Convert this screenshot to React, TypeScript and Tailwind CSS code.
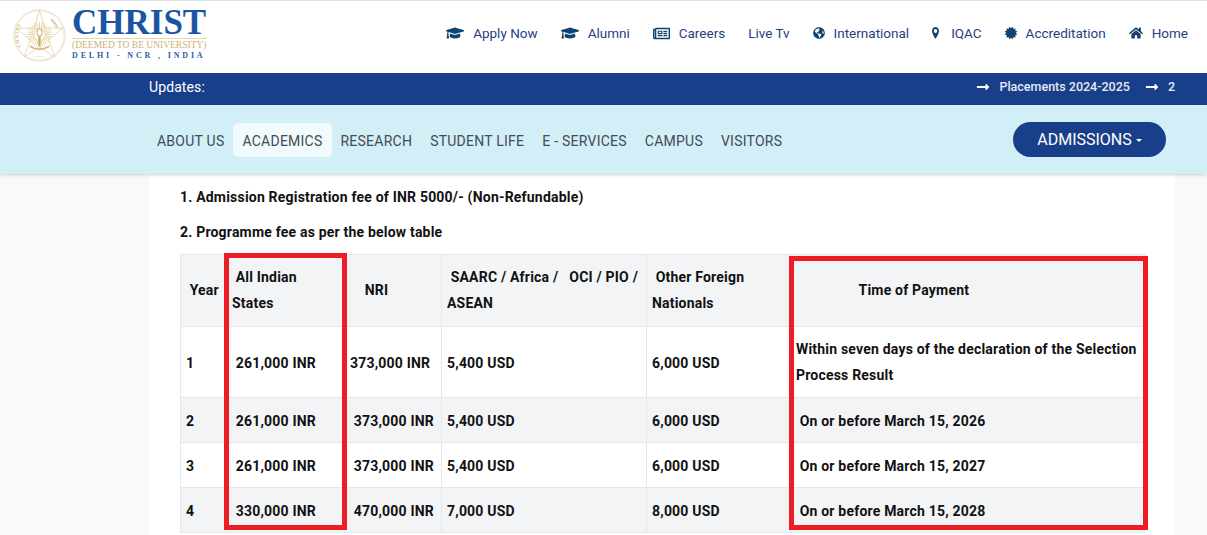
import { FaGraduationCap, FaRegNewspaper, FaGlobeAmericas, FaCertificate, FaHome, FaLongArrowAltRight } from "react-icons/fa";
import type { ReactNode } from "react";

const Pin = () => (
  <svg className="mr-[3px]" width="7" height="12" viewBox="0 0 8 12" preserveAspectRatio="none" fill="currentColor">
    <path fillRule="evenodd" d="M4 0C1.8 0 0 1.8 0 4c0 2.5 4 8 4 8s4-5.5 4-8c0-2.2-1.8-4-4-4zm0 6a2 2 0 1 1 0-4 2 2 0 0 1 0 4z" />
  </svg>
);

const topLinks = [
  { label: "Apply Now", icon: <FaGraduationCap className="text-[18px]" /> },
  { label: "Alumni", icon: <FaGraduationCap className="text-[18px]" /> },
  { label: "Careers", icon: <FaRegNewspaper className="text-[17px]" /> },
  { label: "Live Tv", icon: null },
  { label: "International", icon: <FaGlobeAmericas className="text-[12px]" /> },
  { label: "IQAC", icon: <Pin /> },
  { label: "Accreditation", icon: <FaCertificate className="text-[12px]" /> },
  { label: "Home", icon: <FaHome className="text-[14px]" /> },
];

const navItems = ["ABOUT US", "ACADEMICS", "RESEARCH", "STUDENT LIFE", "E - SERVICES", "CAMPUS", "VISITORS"];

const rows = [
  { y: "1", a: "\u00a0261,000 INR", n: "373,000 INR", s: "5,400 USD", o: "6,000 USD", t: "Within seven days of the declaration of the Selection Process Result", h: "h-[71px]" },
  { y: "2", a: "\u00a0261,000 INR", n: "\u00a0373,000 INR", s: "5,400 USD", o: "6,000 USD", t: "\u00a0On or before March 15, 2026", h: "h-[45px] bg-[#f3f4f6]" },
  { y: "3", a: "\u00a0261,000 INR", n: "\u00a0373,000 INR", s: "5,400 USD", o: "6,000 USD", t: "\u00a0On or before March 15, 2027", h: "h-[45px]" },
  { y: "4", a: "\u00a0330,000 INR", n: "\u00a0470,000 INR", s: "7,000 USD", o: "8,000 USD", t: "\u00a0On or before March 15, 2028", h: "h-[45px] bg-[#f3f4f6]" },
];

function Cell({ children, className = "" }: { children: ReactNode; className?: string }) {
  return <td className={`border border-[#e5e7eb] px-[5px] align-middle ${className}`}>{children}</td>;
}

function HeadCell({ children }: { children: ReactNode }) {
  return <Cell className="pt-0 pb-[2px]">{children}</Cell>;
}

function BodyCell({ children }: { children: ReactNode }) {
  return <Cell className="pt-[1px] pb-0">{children}</Cell>;
}

function Emblem() {
  const rays = Array.from({ length: 28 }, (_, i) => (i * Math.PI * 2) / 28);
  return (
    <svg width="53" height="53" viewBox="0 0 54 54" fill="none" stroke="#dfc996" strokeWidth="0.6">
      <defs>
        <path id="emblem-arc" d="M8.5 38 A21 21 0 0 1 22 6.5" />
      </defs>
      <circle cx="27" cy="27" r="26.2" />
      <circle cx="27" cy="27" r="25" strokeWidth="0.4" />
      <polygon points="27,1.5 32.5,19.5 51,19.5 36.5,31 42.5,49 27,38.5 11.5,49 17.5,31 3,19.5 21.5,19.5" strokeWidth="0.7" />
      {rays.map((a) => (
        <line key={a} x1={27 + 5 * Math.cos(a)} y1={26 + 5 * Math.sin(a)} x2={27 + 12.5 * Math.cos(a)} y2={26 + 12.5 * Math.sin(a)} stroke="#e8d3a2" strokeWidth="1" />
      ))}
      <ellipse cx="27" cy="24" rx="2.6" ry="4" fill="#fff" stroke="#b98f45" strokeWidth="0.8" />
      <rect x="25.9" y="27" width="2.2" height="11" fill="#c9a765" stroke="none" />
      <path d="M17 38 Q27 44 37 38" stroke="#d5b97e" strokeWidth="1.8" />
      <path d="M39 11 A20 20 0 0 1 45 19" stroke="#d9c089" strokeWidth="2.6" strokeDasharray="1.6 0.7" />
      <text fontSize="4.6" fontWeight="700" fill="#d3b67a" stroke="none" fontFamily="'Liberation Serif', serif" letterSpacing="1">
        <textPath href="#emblem-arc">CHRIST</textPath>
      </text>
      <text x="27" y="49" textAnchor="middle" fontSize="2.8" fill="#d9c089" stroke="none" fontFamily="'Liberation Serif', serif">SERVICE</text>
    </svg>
  );
}

export default function App() {
  return (
    <div className="relative w-[1207px] h-[535px] overflow-hidden bg-[#f8f9fb] font-['Roboto',sans-serif]">
      {/* Top header */}
      <div className="h-[73px] flex items-start justify-between bg-white border-t border-[#e0e0e0] pl-[13px] pr-[19px]">
        <div className="flex items-start gap-[6px] pt-[8px]">
          <Emblem />
          <div className="w-[135px] pt-[1px] font-['Liberation_Serif',serif]">
            <div className="text-[35px] leading-[26px] font-bold text-[#1b54a3] whitespace-nowrap">CHRIST</div>
            <div className="mt-[2px] border-t border-[#e6d5ae] pt-[1px] text-[9.5px] leading-[11px] text-[#d0b27a] whitespace-nowrap">(DEEMED TO BE UNIVERSITY)</div>
            <div className="mt-0 text-[8px] leading-[10px] font-bold tracking-[2.85px] text-[#2f5ea8] whitespace-nowrap">DELHI - NCR , INDIA</div>
          </div>
        </div>
        <div className="flex items-center gap-[23px] h-[64px] text-[13.5px] text-[#1f3f7f]">
          {topLinks.map((l) => (
            <div key={l.label} className="flex items-center gap-[9px]">
              {l.icon && <span className="text-[#0f4470]">{l.icon}</span>}
              <span>{l.label}</span>
            </div>
          ))}
        </div>
      </div>

      {/* Updates bar */}
      <div className="h-[32px] flex items-center justify-between bg-[#1a3f8a] pl-[149px] pr-[32px] pb-[4px] text-white">
        <span className="text-[14px] tracking-[0.1px]">Updates:</span>
        <div className="flex items-center text-[12.5px] font-medium text-[#e6eaf4]">
          <FaLongArrowAltRight className="text-[14px] text-white mr-[9px]" />
          <span>Placements 2024-2025</span>
          <FaLongArrowAltRight className="text-[14px] text-white ml-[15px] mr-[9px]" />
          <span>2</span>
        </div>
      </div>

      {/* Main nav */}
      <div className="h-[69px] flex items-start justify-between bg-[#d2eff8] pl-[148px] pr-[41px] shadow-[0_1px_3px_rgba(0,0,0,0.18)] relative z-10">
        <div className="flex items-center mt-[18px] text-[14px] tracking-[0.24px] text-[#444b52]">
          {navItems.map((n) => (
            <div key={n} className={n === "ACADEMICS" ? "h-[34px] flex items-center px-[9px] pt-[2px] rounded-[5px] bg-[#f1fafd]" : "h-[34px] flex items-center px-[9px] pt-[2px]"}>{n}</div>
          ))}
        </div>
        <div className="w-[153px] h-[35px] mt-[17px] pt-[1px] flex items-center justify-center rounded-full bg-[#1a3f8a] text-white text-[16px]">
          ADMISSIONS
          <span className="ml-[4px] w-0 h-0 border-x-[3px] border-x-transparent border-t-[3px] border-t-white" />
        </div>
      </div>

      {/* Page content */}
      <div className="ml-[149px] w-[1026px] h-[361px] bg-white pl-[31px] pt-[13px] text-[14px] font-bold tracking-[0.2px] text-[#111]">
        <p className="h-[20px] leading-[20px]">1. Admission Registration fee of INR 5000/- (Non-Refundable)</p>
        <p className="mt-[15px] h-[20px] leading-[20px]">2. Programme fee as per the below table</p>
        <table className="mt-[12px] w-[964px] table-fixed border-collapse leading-[26px]">
          <colgroup>
            <col className="w-[46px]" />
            <col className="w-[118px]" />
            <col className="w-[97px]" />
            <col className="w-[205px]" />
            <col className="w-[144px]" />
            <col className="w-[354px]" />
          </colgroup>
          <thead>
            <tr className="h-[72px] bg-[#f3f4f6]">
              <HeadCell>{"\u00a0Year"}</HeadCell>
              <HeadCell>{"\u00a0All Indian"}<br />States</HeadCell>
              <HeadCell>{"\u00a0\u00a0\u00a0\u00a0NRI"}</HeadCell>
              <HeadCell>{"\u00a0SAARC / Africa /\u00a0\u00a0 OCI / PIO / ASEAN"}</HeadCell>
              <HeadCell>{"\u00a0Other Foreign Nationals"}</HeadCell>
              <HeadCell>{"\u00a0\u00a0\u00a0\u00a0\u00a0\u00a0\u00a0\u00a0\u00a0\u00a0\u00a0\u00a0\u00a0\u00a0\u00a0\u00a0\u00a0Time of Payment"}</HeadCell>
            </tr>
          </thead>
          <tbody>
            {rows.map((r) => (
              <tr key={r.y} className={r.h}>
                <BodyCell>{r.y}</BodyCell>
                <BodyCell>{r.a}</BodyCell>
                <BodyCell>{r.n}</BodyCell>
                <BodyCell>{r.s}</BodyCell>
                <BodyCell>{r.o}</BodyCell>
                {r.y === "1" ? <Cell className="py-0">{r.t}</Cell> : <BodyCell>{r.t}</BodyCell>}
              </tr>
            ))}
          </tbody>
        </table>
      </div>

      {/* Red annotation boxes */}
      <div className="absolute left-[224px] top-[253px] w-[123px] h-[277px] border-[5px] border-[#ee1c25]" />
      <div className="absolute left-[789px] top-[256px] w-[359px] h-[274px] border-[5px] border-[#ee1c25]" />
    </div>
  );
}
